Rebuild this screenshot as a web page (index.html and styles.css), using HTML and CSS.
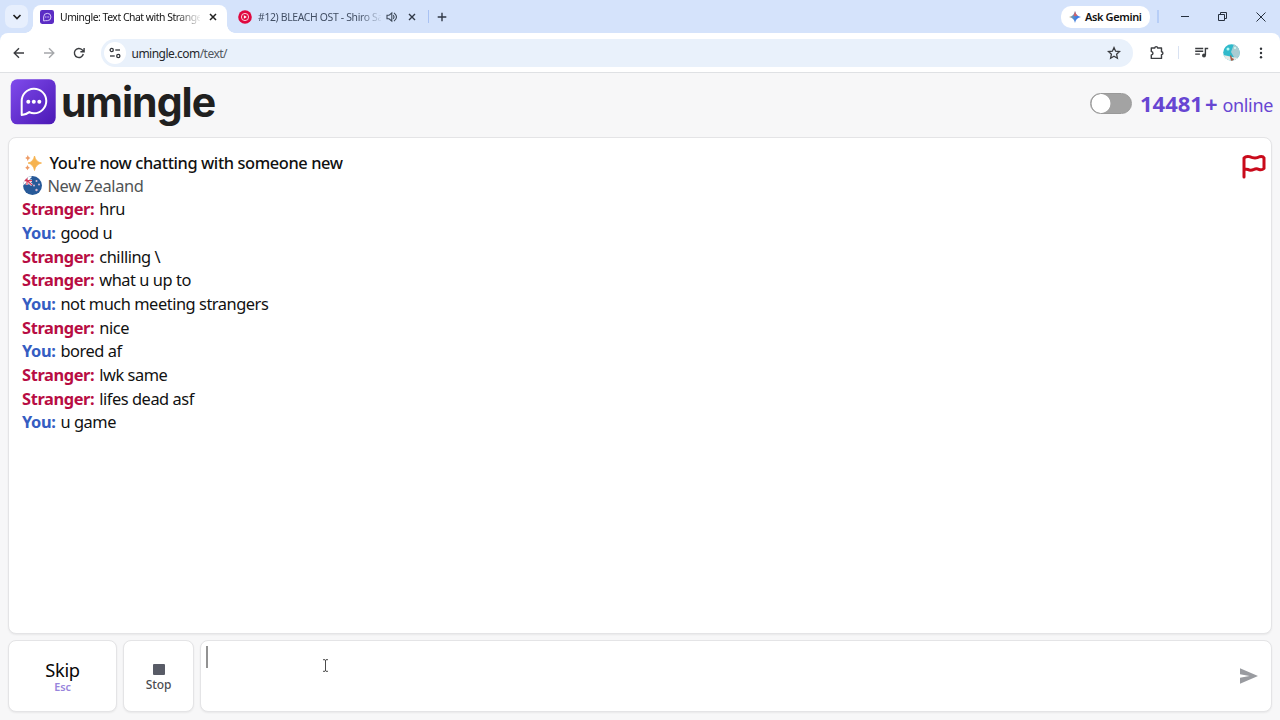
FILE: index.html
```html
<!DOCTYPE html>
<html lang="en">
<head>
<meta charset="utf-8">
<title>Umingle: Text Chat with Strangers</title>
<link rel="stylesheet" href="styles.css">
</head>
<body>
<header class="tabs">
  <span class="tab-search"><svg width="10" height="8" viewBox="0 0 10 8"><path d="M1.5 2 5 5.5 8.500 2" fill="none" stroke="#222" stroke-width="1.7"/></svg></span>
  <div class="tab active">
    <svg class="fav" width="14" height="14" viewBox="0 0 46 46"><rect width="46" height="46" rx="7" fill="#5b2cc4"/><path d="M12 36V23a12 12 0 1 1 12 12h-6z" fill="none" stroke="#e5d9ff" stroke-width="3"/><path d="M17 23h14" stroke="#e5d9ff" stroke-width="3.500" stroke-dasharray="3 2"/></svg>
    <span class="tab-title t1">Umingle: Text Chat with Strange</span>
    <svg class="close" width="8" height="8" viewBox="0 0 8 8"><path d="m1 1 6 6M7 1 1 7" stroke="#222" stroke-width="1.500"/></svg>
  </div>
  <div class="tab second">
    <svg class="fav" width="14" height="14" viewBox="0 0 14 14"><circle cx="7" cy="7" r="6.800" fill="#e0083f"/><circle cx="7" cy="7" r="3.600" fill="none" stroke="#fff" stroke-width=".8"/><path d="m5.900 5.200 3 1.800-3 1.800z" fill="#fff"/></svg>
    <span class="tab-title t2">#12) BLEACH OST - Shiro Sa</span>
    <svg class="sound" width="12" height="12" viewBox="0 0 12 12"><path d="M1 4.300h2L5.800 2v8L3 7.700H1z" fill="none" stroke="#3c4858" stroke-width="1.100"/><path d="M7.300 4.200q1.500 1.800 0 3.600M8 1.800q5 4.200 0 8.400" fill="none" stroke="#3c4858" stroke-width="1.100"/></svg>
    <svg class="close" width="8" height="8" viewBox="0 0 8 8"><path d="m1 1 6 6M7 1 1 7" stroke="#303846" stroke-width="1.400"/></svg>
  </div>
  <i class="tab-rule"></i>
  <svg class="plus" width="10" height="10" viewBox="0 0 10 10"><path d="M5 .7v8.600M.7 5h8.600" stroke="#303846" stroke-width="1.400"/></svg>
  <div class="window">
    <span class="gemini"><svg width="12" height="12" viewBox="0 0 12 12"><defs><linearGradient id="gem" x1="0" y1=".3" x2="1" y2=".6"><stop stop-color="#d5a24a"/><stop offset=".35" stop-color="#5d91c4"/><stop offset=".75" stop-color="#3876e8"/><stop offset="1" stop-color="#3876e8"/></linearGradient></defs><path d="M6 0q.8 5.200 6 6-5.200.8-6 6-.8-5.200-6-6 5.200-.8 6-6z" fill="url(#gem)"/><path d="M6 0q.6 3.400 2.700 4.800L5 5.300 4.700 4Q5.700 2.700 6 0z" fill="#d56167"/></svg><b>Ask Gemini</b></span>
    <i class="window-rule"></i>
    <svg width="86" height="12" viewBox="0 0 86 12" fill="none" stroke="#26303e"><path d="M1 5.500h8"/><path d="M38.500 3.500h6v6h-6zM40.500 3V1.500h6v6H45M76.500 1.500l9 9M85.500 1.500l-9 9"/></svg>
  </div>
</header>
<nav class="toolbar">
  <svg class="arrows" width="72" height="14" viewBox="0 0 72 14" fill="none" stroke-width="1.400"><path d="M11 7H1.500M6 2.200 1.200 7 6 11.800" stroke="#3b3d40"/><path d="M31 7h9.500M36 2.200 40.800 7 36 11.800" stroke="#a5a7aa"/><path d="M70.300 8a4.500 4.500 0 1 1-1.200-4.200L71 5.500M71.100 2v3.700h-3.700" stroke="#3b3d40"/></svg>
  <div class="address">
    <span class="site"><svg width="12" height="12" viewBox="0 0 12 12" fill="none" stroke="#303338" stroke-width="1.300"><circle cx="2.700" cy="3" r="1.600"/><path d="M6.300 3H11"/><circle cx="9.300" cy="9" r="1.600"/><path d="M1 9h4.700"/></svg></span>
    <span class="url">umingle.com<em>/text/</em></span>
    <svg class="star" width="14" height="14" viewBox="0 0 14 14"><path d="m7 1.600 1.600 3.600 3.900.4-2.900 2.700.8 3.900L7 10.200l-3.400 2 .8-3.900-2.900-2.700 3.900-.4z" fill="none" stroke="#3b3d40" stroke-width="1.300"/></svg>
  </div>
  <svg class="puzzle" width="16" height="16" viewBox="0 0 16 16"><path d="M2.300 3h3.500a1.400 1.400 0 0 1 2.800 0h3.900V6.800a1.400 1.400 0 0 1 0 2.800v3.800H2.300v-3.500a1.650 1.650 0 0 0 0-3.300z" fill="none" stroke="#3b3d40" stroke-width="1.400" stroke-linejoin="round"/></svg>
  <i class="bar-rule"></i>
  <svg class="media" width="14" height="12" viewBox="0 0 14 12"><path d="M.2 1.500h8M.2 4.300h8M.2 7.100h4.700M10.400 8.200V1.500H13.200" fill="none" stroke="#3b3d40" stroke-width="1.400"/><circle cx="9" cy="8.500" r="2" fill="#3b3d40"/></svg>
  <svg class="avatar" width="17" height="17" viewBox="0 0 17 17"><defs><clipPath id="avatar"><circle cx="8.500" cy="8.500" r="8.300"/></clipPath></defs><g clip-path="url(#avatar)"><path fill="#2fb9cb" d="M0 0h17v17H0z"/><path d="m11 0 6 2v11l-5 2-4-7z" fill="#a9ccd2"/><path d="m0 11 5 1 4 1 6 1v3H0z" fill="#e5e9e6"/><path d="m7 12 1-1 1 3 2 1-1 2H8z" fill="#a75b47"/><circle cx="5" cy="5" r="1.500" fill="#b3fbf2"/><circle cx="12" cy="4" r="1" fill="#d6fff9"/></g></svg>
  <svg class="dots" width="4" height="12" viewBox="0 0 4 12" fill="#303338"><circle cx="2" cy="1.700" r="1.200"/><circle cx="2" cy="6" r="1.200"/><circle cx="2" cy="10.300" r="1.200"/></svg>
</nav>
<main>
  <div class="brand-row">
    <svg width="46" height="46" viewBox="0 0 46 46"><defs><linearGradient id="brand" x1="0" y1="0" x2="1" y2="1"><stop stop-color="#804bec"/><stop offset="1" stop-color="#4a18b5"/></linearGradient></defs><rect x=".7" y=".3" width="45" height="45" rx="6.500" fill="url(#brand)"/><path d="M11.700 36V22.500A12.300 12.300 0 1 1 24 34.300q-2.500 0-4.700-1.200-3.100 2.500-7.600 2.900z" fill="none" stroke="#fff" stroke-width="2" stroke-linejoin="round"/><g fill="#fff"><circle cx="18.300" cy="22.700" r="2"/><circle cx="23.800" cy="22.700" r="2"/><circle cx="29.300" cy="22.700" r="2"/></g></svg>
    <h1>umingle</h1>
    <div class="online"><span class="toggle"></span><b>14481</b><b class="more">+</b><span class="label">online</span></div>
  </div>
  <section class="chat">
    <div class="log">
      <p class="intro"><svg width="18" height="18" viewBox="0 0 18 18"><path d="M10.500 2q1.300 6 7 7-5.700 1.300-7 7.500-1.200-6.200-6.500-7.500 5.300-1 6.500-7z" fill="#f6b34f" stroke="#f6b34f" stroke-width=".8"/><path d="M3.800 1q.5 2.600 2.700 3.100-2.200.6-2.700 3.100-.5-2.500-2.600-3.100Q3.300 3.600 3.800 1zM3.500 11q.5 2.200 2.300 2.700-1.800.5-2.300 2.600-.5-2.100-2.300-2.600 1.800-.5 2.300-2.700z" fill="#ee9c66"/></svg><span>You're now chatting with someone new</span></p>
      <p class="country"><svg width="20" height="20" viewBox="0 0 20 20"><defs><clipPath id="flag"><circle cx="10.500" cy="9.600" r="9.500"/></clipPath></defs><g clip-path="url(#flag)"><path fill="#275998" d="M0 0h20v20H0z"/><path d="m0 0 10 9M0 9 9 0" stroke="#fff" stroke-width="2.500"/><path d="M5 0v9M0 4.700h10" stroke="#fff" stroke-width="2.600"/><path d="M5 0v9M0 4.700h10M0 0l10 9" stroke="#d33a59" stroke-width="1.200"/><g fill="#d7b9d1"><circle cx="14.500" cy="5" r="1"/><circle cx="12" cy="9.500" r="1"/><circle cx="17" cy="8.500" r="1"/><circle cx="14.500" cy="14" r="1.200"/></g></g></svg><span>New Zealand</span></p>
      <p><b class="stranger">Stranger:</b><span>hru</span></p>
      <p><b class="you">You:</b><span>good u</span></p>
      <p><b class="stranger">Stranger:</b><span>chilling \</span></p>
      <p><b class="stranger">Stranger:</b><span>what u up to</span></p>
      <p><b class="you">You:</b><span>not much meeting strangers</span></p>
      <p><b class="stranger">Stranger:</b><span>nice</span></p>
      <p><b class="you">You:</b><span>bored af</span></p>
      <p><b class="stranger">Stranger:</b><span>lwk same</span></p>
      <p><b class="stranger">Stranger:</b><span>lifes dead asf</span></p>
      <p><b class="you">You:</b><span>u game</span></p>
    </div>
    <svg class="report" width="26" height="26" viewBox="0 0 26 26"><path d="M3 23V4q2-2.200 5.500-1.400 3 1.300 5.500 1.300 2.500 0 4.500-1.200 3.500-.8 4.500 1.300v10.500q-2 1.800-5 1-2.500-1.500-5-.2-3.500 1.700-6 .2-2-.8-4 .2" fill="none" stroke="#c90a1b" stroke-width="3" stroke-linecap="round" stroke-linejoin="round"/></svg>
  </section>
  <footer>
    <button class="skip"><span>Skip</span><small>Esc</small></button>
    <button class="stop"><i></i><span>Stop</span></button>
    <div class="composer"><i class="caret"></i><svg class="pointer" width="7" height="13" viewBox="0 0 7 13"><path d="M1 .7h2l.5.6.5-.6h2M3.500 1v11M1 12.300h2l.5-.6.5.6h2" fill="none" stroke="#4b4b4b"/></svg><svg class="send" width="20" height="18" viewBox="0 0 20 18"><path d="M1 1.200 19 9 1 16.800v-6L10.500 9 1 7.200z" fill="#999ba0"/></svg></div>
  </footer>
</main>
</body>
</html>
```
FILE: styles.css
```css
* { box-sizing: border-box; }
body { margin: 0; width: 1280px; height: 720px; overflow: hidden; font-family: "Noto Sans", sans-serif; color: #111; display: flex; flex-direction: column; background: #f7f7f8; }
svg { display: block; flex: none; }
p, h1 { margin: 0; }
.tabs { height: 41px; flex: none; display: flex; background: #d5e3fb; padding: 5px 0 0 5px; margin-bottom: -8px; }
.tab-search { width: 23px; height: 23px; border-radius: 7px; background: #e7effd; display: grid; place-items: center; }
.tab { display: flex; align-items: center; height: 24px; font-size: 10.4px; }
.tab-title { white-space: nowrap; mask-image: linear-gradient(90deg, #000 82%, rgba(0, 0, 0, .08)); }
.active { position: relative; width: 194px; height: 28px; margin-left: 5px; padding: 0 10px 4px 7px; border-radius: 8px 8px 0 0; background: #fff; }
.active::before, .active::after { content: ""; position: absolute; bottom: 0; width: 8px; height: 8px; }
.active::before { left: -8px; background: radial-gradient(circle at 0 0, transparent 7.5px, #fff 8px); }
.active::after { right: -8px; background: radial-gradient(circle at 100% 0, transparent 7.5px, #fff 8px); }
.t1 { width: 140px; margin-left: 6px; letter-spacing: -.47px; }
.active .close { margin-left: auto; }
.second { margin-left: 11px; color: #414e63; }
.t2 { width: 123px; margin-left: 6px; letter-spacing: -.33px; }
.sound { margin-left: 5px; }
.second .close { margin-left: 10px; }
.tab-rule { width: 1px; height: 13px; margin: 5px 8px 0 12px; background: #a9c2f3; }
.plus { margin-top: 7px; }
.window { margin-left: auto; display: flex; align-items: center; height: 23px; padding-right: 14px; }
.gemini { width: 89px; height: 22px; display: flex; align-items: center; gap: 4px; border-radius: 10px; padding-left: 8px; background: #fff; font-size: 11px; letter-spacing: -.38px; white-space: nowrap; }
.gemini b { font-weight: 600; }
.window-rule { width: 2px; height: 13px; margin: 0 21px 0 7px; background: #b7cef7; }
.toolbar { position: relative; height: 40px; flex: none; display: flex; align-items: center; padding: 0 17px 0 13px; background: #fff; border-bottom: 1px solid #dfe1e4; border-radius: 8px 8px 0 0; }
.address { width: 1032px; height: 28px; margin-left: 16px; border-radius: 14px; padding: 0 12px 0 3px; background: #e9f1fb; display: flex; align-items: center; }
.site { width: 22px; height: 22px; border-radius: 50%; background: #fff; display: grid; place-items: center; }
.url { margin: 1px 0 0 5.500px; font-size: 12px; letter-spacing: -.52px; color: #26282b; }
.url em { font-style: normal; color: #53585f; }
.star { margin-left: auto; }
.puzzle { margin-left: 16px; }
.bar-rule { width: 1px; height: 13px; background: #d9e2f2; margin: 0 16px 0 13px; }
.avatar { margin: -1px 0 0 13.500px; }
.dots { margin-left: auto; }
main { flex: 1; padding: 6px 8px 8px; display: flex; flex-direction: column; }
.brand-row { height: 58px; flex: none; padding-left: 2px; display: flex; align-items: flex-start; }
h1 { margin: -2px 0 0 5px; font: 700 41px/50px Inter, sans-serif; letter-spacing: -.98px; color: #202020; }
.online { display: flex; align-items: center; height: 50px; margin: 0 -1px 0 auto; color: #6746d2; white-space: nowrap; }
.toggle { width: 42px; height: 21px; margin: -2px 8px 0 0; border: 1px solid #999; border-radius: 11px; background: radial-gradient(circle at 10px 50%, #fff 9px, #a3a3a3 9.8px); }
.online b { margin-top: -2px; font-size: 22px; letter-spacing: 0; }
.online .more { margin-left: 2px; }
.label { margin: 1px 0 0 5px; font-size: 18px; letter-spacing: -.35px; }
.chat, .skip, .stop, .composer { background: #fff; border: 1px solid #e4e4e6; border-radius: 8px; box-shadow: 0 1px 2px #00000010; }
.chat { height: 497px; flex: none; display: flex; justify-content: space-between; padding: 13px 4px 0 13px; }
.log { display: flex; flex-direction: column; }
.log p { height: 23.65px; display: flex; align-items: center; gap: 5px; font-size: 16.4px; line-height: 23.65px; letter-spacing: -.46px; white-space: nowrap; }
.log b { letter-spacing: -.38px; }
.stranger { color: #b80d43; }
.you { color: #355dc2; }
.intro span { font-weight: 500; letter-spacing: -.4px; }
.log .intro { gap: 7.500px; padding-left: 2px; }
.log .country { color: #505456; height: 22.800px; letter-spacing: -.36px; }
.country span { margin-left: .5px; }
.report { margin-top: 2.500px; }
footer { height: 72px; margin-top: 6px; display: flex; gap: 6px; flex: none; }
button { font: inherit; padding: 0; display: flex; flex-direction: column; align-items: center; justify-content: flex-start; }
.skip { width: 109px; padding-top: 19px; font-size: 18.3px; line-height: 20px; letter-spacing: -.35px; color: #080808; }
.skip small { margin-top: 1px; font-size: 10.8px; line-height: 11px; color: #9885dc; font-weight: 600; letter-spacing: -.1px; }
.stop { width: 71px; padding-top: 23px; font-size: 12px; line-height: 18px; font-weight: 500; letter-spacing: -.1px; color: #4b4d52; }
.stop i { width: 12px; height: 11px; border-radius: 1px; background: #585b66; }
.stop span { margin-top: 1px; }
.composer { flex: 1; display: flex; padding: 5px 12px 0 5px; }
.caret { width: 2px; height: 22px; background: #929292; }
.pointer { margin: 13px 0 0 114px; }
.send { margin: 20.500px 0 0 auto; }
```
